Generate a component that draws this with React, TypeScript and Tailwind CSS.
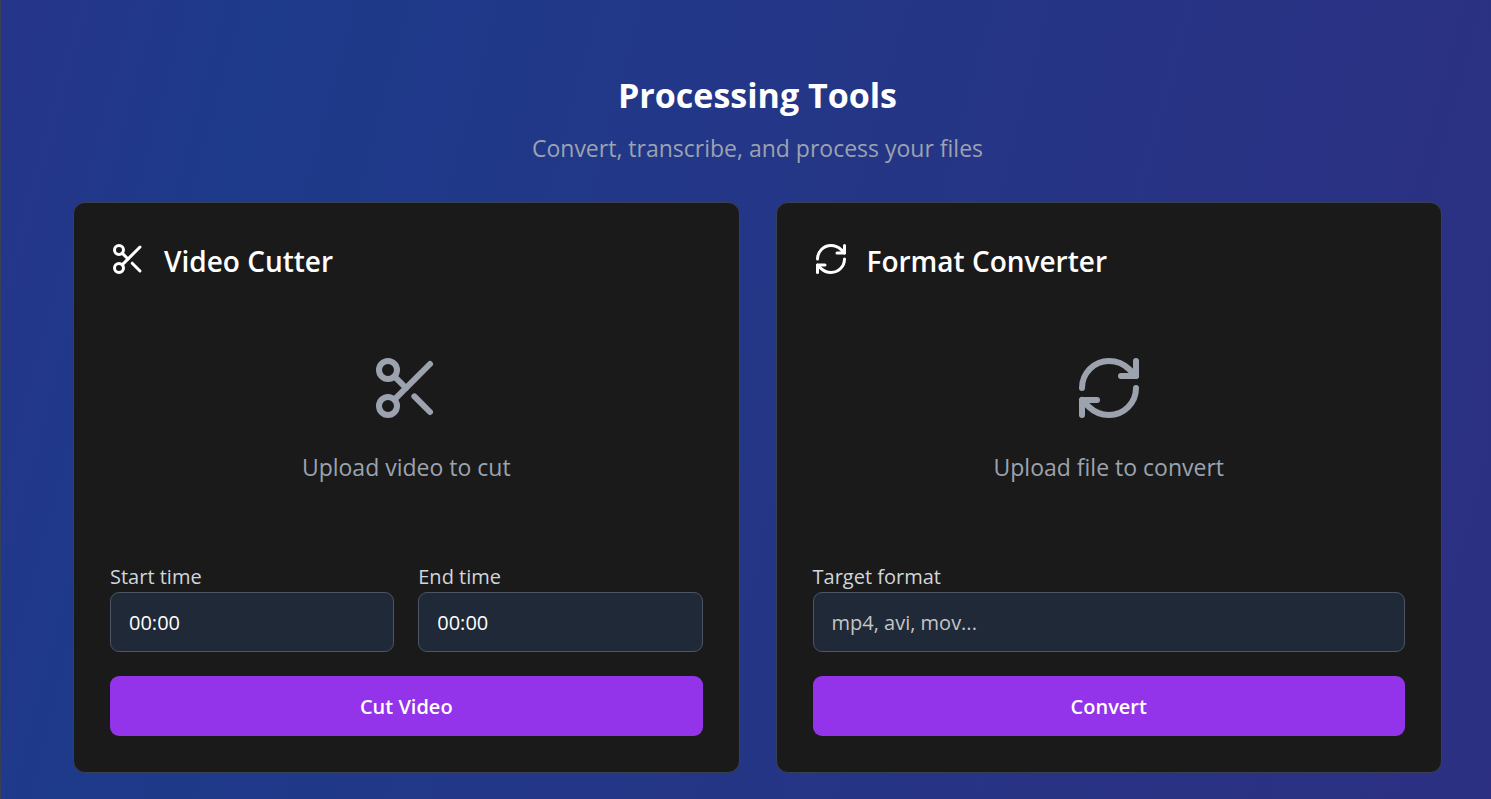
import type { LucideIcon } from "lucide-react";
import { RefreshCw, Scissors } from "lucide-react";
import type { ReactNode } from "react";

function Field({ id, label, value, placeholder }: { id: string; label: string; value?: string; placeholder?: string }) {
  return (
    <div className="flex min-w-0 flex-1 flex-col">
      <label htmlFor={id} className="text-[20px] leading-[30px] text-gray-300">
        {label}
      </label>
      <input
        id={id}
        type="text"
        defaultValue={value}
        placeholder={placeholder}
        className="h-[60px] w-full rounded-[9px] border border-[#4b5563] bg-[#1f2937] px-[18px] text-[20px] text-white placeholder:text-[#c5c5c5]"
      />
    </div>
  );
}

function ToolCard({
  icon: Icon,
  title,
  hint,
  action,
  children,
}: {
  icon: LucideIcon;
  title: string;
  hint: string;
  action: string;
  children: ReactNode;
}) {
  return (
    <section className="rounded-xl border border-[#374151] bg-[#1a1a1a] p-9">
      <div className="flex items-center gap-[18px]">
        <Icon className="size-9 text-white" />
        <h3 className="pt-1 text-[28px] leading-9 font-semibold text-white">{title}</h3>
      </div>
      <div className="flex flex-col items-center pt-[73px] pb-[76px] text-[#9ca3af]">
        <Icon className="mb-6 size-[72px]" />
        <p className="text-[23px] leading-[38px]">{hint}</p>
      </div>
      <div className="flex gap-6">{children}</div>
      <button
        type="button"
        className="mt-6 h-[60px] w-full rounded-[9px] bg-[#9333ea] pt-0.5 text-[20px] font-semibold text-white"
      >
        {action}
      </button>
    </section>
  );
}

export default function App() {
  return (
    <main className="min-h-screen border-l border-[#374151] bg-[linear-gradient(105deg,#26358a_0%,#1e3a8a_16%,#2d3082_100%)] pt-[72px] pr-[49px] pb-6 pl-[72px] font-['Open_Sans','Noto_Sans',sans-serif]">
      <header className="mb-9 text-center">
        <h2 className="text-[34px] leading-[46px] font-bold text-white">Processing Tools</h2>
        <p className="mt-3 text-[23px] leading-9 text-[#9ca3af]">Convert, transcribe, and process your files</p>
      </header>
      <div className="grid grid-cols-2 gap-9">
        <ToolCard icon={Scissors} title="Video Cutter" hint="Upload video to cut" action="Cut Video">
          <Field id="start-time" label="Start time" value="00:00" />
          <Field id="end-time" label="End time" value="00:00" />
        </ToolCard>
        <ToolCard icon={RefreshCw} title="Format Converter" hint="Upload file to convert" action="Convert">
          <Field id="target-format" label="Target format" placeholder="mp4, avi, mov..." />
        </ToolCard>
      </div>
    </main>
  );
}
